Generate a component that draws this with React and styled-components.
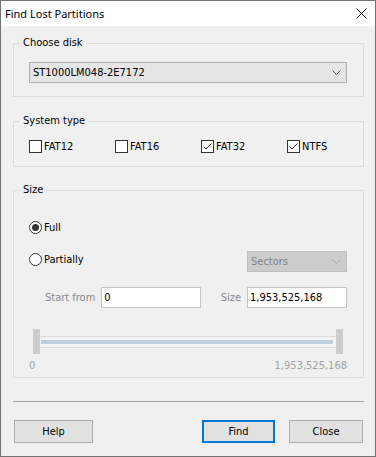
import React from "react";
import styled, { createGlobalStyle } from "styled-components";

const Global = createGlobalStyle`
  html, body { margin: 0; padding: 0; background: #f0f0f0; }
  * { box-sizing: border-box; }
`;

const UI_FONT = `"DejaVu Sans Condensed", "DejaVu Sans", "Liberation Sans", sans-serif`;

const Window = styled.div`
  width: 376px;
  height: 457px;
  border: 1px solid #737373;
  background: #f0f0f0;
  display: flex;
  flex-direction: column;
  font-family: ${UI_FONT};
  font-size: 11px;
  color: #000;
`;

const TitleBar = styled.div`
  height: 25px;
  background: #fff;
  display: flex;
  align-items: center;
  justify-content: space-between;
  padding: 0 8px 0 4px;
`;

const Title = styled.div`
  font-family: "Noto Sans", "Open Sans", sans-serif;
  font-size: 11px;
  line-height: 16px;
`;

const CloseGlyph = styled.svg`
  width: 11px;
  height: 11px;
  display: block;
`;

const Body = styled.div`
  flex: 1;
  display: flex;
  flex-direction: column;
  padding: 9px 11px 0 12px;
`;

const Group = styled.fieldset`
  margin: ${(p) => p.$mt || 0}px 0 0 0;
  padding: ${(p) => p.$pad};
  border: 1px solid #dcdcdc;
  min-width: 0;
`;

const Legend = styled.legend`
  margin-left: -9px;
  padding: 0 3px;
  line-height: 16px;
  font-size: 11px;
`;

const Combo = styled.div`
  height: 21px;
  display: flex;
  align-items: center;
  justify-content: space-between;
  padding: 0 5px 0 3px;
  border: 1px solid ${(p) => (p.$disabled ? "#bfbfbf" : "#adadad")};
  background: ${(p) => (p.$disabled ? "#cccccc" : "#e5e5e5")};
  color: ${(p) => (p.$disabled ? "#838383" : "#000")};
  width: ${(p) => (p.$width ? `${p.$width}px` : "auto")};
  margin-left: ${(p) => (p.$pushRight ? "auto" : "0")};
`;

const Chevron = ({ color }) => (
  <svg width="9" height="5" viewBox="0 0 9 5" style={{ display: "block" }}>
    <polyline points="0.5,0.5 4.5,4.5 8.5,0.5" fill="none" stroke={color} strokeWidth="1" />
  </svg>
);

const CheckGrid = styled.div`
  display: grid;
  grid-template-columns: repeat(4, 86px);
  height: 13px;
`;

const Option = styled.label`
  display: flex;
  align-items: center;
  gap: 2px;
  height: 13px;
  line-height: 13px;
  white-space: nowrap;
  margin-top: ${(p) => p.$mt || 0}px;
`;

const Box = styled.span`
  width: 13px;
  height: 13px;
  border: 1px solid #333;
  background: #fff;
  display: flex;
  align-items: center;
  justify-content: center;
  flex: none;
`;

const Circle = styled.span`
  width: 13px;
  height: 13px;
  border: 1px solid #333;
  border-radius: 50%;
  background: #fff;
  display: flex;
  align-items: center;
  justify-content: center;
  flex: none;
  &::after {
    content: "";
    width: 7px;
    height: 7px;
    border-radius: 50%;
    background: ${(p) => (p.$on ? "#333" : "transparent")};
  }
`;

const CheckBox = ({ label, checked }) => (
  <Option>
    <Box>
      {checked && (
        <svg width="11" height="11" viewBox="0 0 11 11" style={{ display: "block" }}>
          <polyline points="1.5,5.5 4,8 9.5,2.5" fill="none" stroke="#333" strokeWidth="1" />
        </svg>
      )}
    </Box>
    {label}
  </Option>
);

const Radio = ({ label, on, mt }) => (
  <Option $mt={mt}>
    <Circle $on={on} />
    {label}
  </Option>
);

const Row = styled.div`
  display: flex;
  align-items: ${(p) => p.$align || "center"};
  margin-top: ${(p) => p.$mt || 0}px;
`;

const Field = styled.div`
  display: flex;
  align-items: center;
  gap: 6px;
  margin-left: ${(p) => (p.$pushRight ? "auto" : `${p.$ml || 0}px`)};
`;

const FieldLabel = styled.span`
  color: #8a8a8a;
`;

const TextInput = styled.input`
  width: 100px;
  height: 21px;
  border: 1px solid #c4c4c4;
  background: #fff;
  padding: 0 2px;
  font-family: ${UI_FONT};
  font-size: 11px;
  color: #000;
  outline: none;
`;

const Slider = styled.div`
  display: flex;
  align-items: center;
  height: 25px;
  margin: 21px 4px 0 4px;
`;

const Thumb = styled.div`
  width: 7px;
  height: 25px;
  background: #cdcdcd;
  flex: none;
`;

const Track = styled.div`
  flex: 1;
  height: 12px;
  border-top: 1px solid #dcdcdc;
  border-bottom: 1px solid #dcdcdc;
  background: #f3f3f3;
  display: flex;
  align-items: center;
  padding: 0 3px 0 1px;
`;

const TrackFill = styled.div`
  flex: 1;
  height: 4px;
  background: #bdd0e1;
`;

const Scale = styled.div`
  display: flex;
  justify-content: space-between;
  line-height: 16px;
  margin-top: 4px;
  color: #a3a3a3;
`;

const Separator = styled.div`
  height: 1px;
  background: #a0a0a0;
  margin-top: 23px;
`;

const ButtonBar = styled.div`
  display: flex;
  margin-top: 18px;
  padding: 0 1px;
`;

const Button = styled.button`
  height: 23px;
  width: ${(p) => p.$w}px;
  margin-left: ${(p) => (p.$auto ? "auto" : `${p.$ml || 0}px`)};
  background: #e1e1e1;
  border: ${(p) => (p.$default ? "2px solid #0078d7" : "1px solid #adadad")};
  font-family: ${UI_FONT};
  font-size: 11px;
  color: #000;
  padding: 0;
`;

export default function App() {
  return (
    <>
      <Global />
      <Window>
        <TitleBar>
          <Title>Find Lost Partitions</Title>
          <CloseGlyph viewBox="0 0 11 11">
            <line x1="0.5" y1="0.5" x2="10.5" y2="10.5" stroke="#000" strokeWidth="1" />
            <line x1="10.5" y1="0.5" x2="0.5" y2="10.5" stroke="#000" strokeWidth="1" />
          </CloseGlyph>
        </TitleBar>
        <Body>
          <Group $pad="11px 16px 13px 15px">
            <Legend>Choose disk</Legend>
            <Combo>
              <span>ST1000LM048-2E7172</span>
              <Chevron color="#555" />
            </Combo>
          </Group>

          <Group $mt={16} $pad="11px 16px 13px 15px">
            <Legend>System type</Legend>
            <CheckGrid>
              <CheckBox label="FAT12" />
              <CheckBox label="FAT16" />
              <CheckBox label="FAT32" checked />
              <CheckBox label="NTFS" checked />
            </CheckGrid>
          </Group>

          <Group $mt={15} $pad="0 16px 3px 15px">
            <Legend>Size</Legend>
            <Radio label="Full" on mt={23} />
            <Row $mt={17} $align="flex-start">
              <Radio label="Partially" mt={2} />
              <Combo $disabled $width={100} $pushRight>
                <span>Sectors</span>
                <Chevron color="#a8a8a8" />
              </Combo>
            </Row>
            <Row $mt={15}>
              <Field $ml={16}>
                <FieldLabel>Start from</FieldLabel>
                <TextInput readOnly value="0" />
              </Field>
              <Field $pushRight>
                <FieldLabel>Size</FieldLabel>
                <TextInput readOnly value="1,953,525,168" />
              </Field>
            </Row>
            <Slider>
              <Thumb />
              <Track>
                <TrackFill />
              </Track>
              <Thumb />
            </Slider>
            <Scale>
              <span>0</span>
              <span>1,953,525,168</span>
            </Scale>
          </Group>

          <Separator />
          <ButtonBar>
            <Button $w={79}>Help</Button>
            <Button $w={73} $auto $default>Find</Button>
            <Button $w={74} $ml={14}>Close</Button>
          </ButtonBar>
        </Body>
      </Window>
    </>
  );
}
